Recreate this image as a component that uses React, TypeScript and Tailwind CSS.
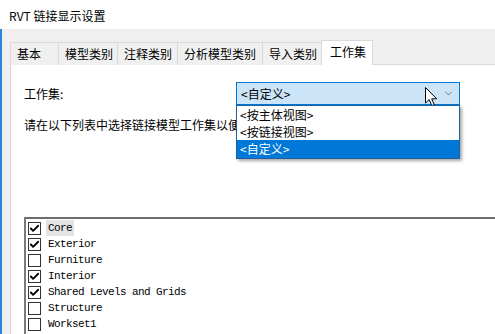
import { Check, ChevronDown } from "lucide-react"

const tabs = [
  { label: "基本", w: 49 },
  { label: "模型类别", w: 60 },
  { label: "注释类别", w: 61 },
  { label: "分析模型类别", w: 86 },
  { label: "导入类别", w: 60 },
]

const worksets = [
  { name: "Core", checked: true, focus: true },
  { name: "Exterior", checked: true },
  { name: "Furniture", checked: false },
  { name: "Interior", checked: true },
  { name: "Shared Levels and Grids", checked: true },
  { name: "Structure", checked: false },
  { name: "Workset1", checked: false },
]

function Cursor() {
  return (
    <svg width="14" height="20" viewBox="0 0 14 20" className="absolute left-[188px] top-[4px]">
      <path d="M0.5 0.5 L0.5 16 L4.2 12.6 L6.8 18.6 L9.2 17.6 L6.7 11.8 L11.6 11.8 Z" fill="#fff" stroke="#000" strokeWidth="1" strokeLinejoin="miter" />
    </svg>
  )
}

export default function App() {
  return (
    <div
      className="w-[495px] h-[334px] overflow-hidden flex flex-col bg-white text-[12px] text-black"
      style={{ fontFamily: '"Noto Sans CJK SC", "Noto Sans", sans-serif' }}
    >
      <div className="h-[29px] shrink-0 bg-white flex items-center pl-[9px] pt-[2px]">RVT 链接显示设置</div>

      <div className="flex-1 flex flex-col bg-[#f0f0f0] border-l-2 border-[#2b86dc] pl-[8px]">
        <div className="flex items-end pt-[11px] relative z-10 -mb-px">
          {tabs.map((t, i) => (
            <div
              key={t.label}
              className={`h-[23px] flex items-center pl-[6px] border border-b-0 border-[#d9d9d9] bg-[#f0f0f0] ${i > 0 ? "-ml-px" : ""}`}
              style={{ width: t.w }}
            >
              {t.label}
            </div>
          ))}
          <div className="-ml-px w-[52px] h-[25px] flex items-center pl-[8px] pb-[2px] border border-b-0 border-[#d9d9d9] bg-white">
            工作集
          </div>
        </div>

        <div className="flex-1 bg-white border-t border-l border-[#d9d9d9] flex flex-col pl-[13px]">
          <div className="mt-[17px] flex items-center h-[23px]">
            <div className="w-[212px]">工作集:</div>
            <div className="relative w-[224px] h-[23px] bg-[#cce4f7] border border-[#0078d7] flex items-center pl-[4px]">
              &lt;自定义&gt;
              <Cursor />
              <ChevronDown className="absolute right-[5px] top-[5px] w-[11px] h-[11px] text-[#444]" strokeWidth={1.5} />
              <div className="absolute left-[-1px] top-[22px] w-[224px] bg-white border border-[#1f5f9e] shadow-[2px_2px_3px_rgba(0,0,0,0.35)] z-20">
                <div className="h-[17px] flex items-center pl-[3px]">&lt;按主体视图&gt;</div>
                <div className="h-[17px] flex items-center pl-[3px]">&lt;按链接视图&gt;</div>
                <div className="h-[18px] flex items-center pl-[3px] bg-[#0078d7] text-white">&lt;自定义&gt;</div>
              </div>
            </div>
          </div>

          <div className="mt-[11px] w-[216px] overflow-hidden whitespace-nowrap">请在以下列表中选择链接模型工作集以便在视图中显示:</div>

          <div
            className="mt-[83px] flex-1 border-t-2 border-l-2 border-t-[#6d6d6d] border-l-[#7a7a7a] pl-[2px] pt-[1px]"
            style={{ fontFamily: '"Liberation Mono", monospace' }}
          >
            {worksets.map((w) => (
              <div key={w.name} className="h-[16px] flex items-center">
                <div className="w-[13px] h-[13px] border border-[#333] bg-white flex items-center justify-center">
                  {w.checked && <Check className="w-[11px] h-[11px] text-black" strokeWidth={4} />}
                </div>
                <div
                  className={`ml-[5px] h-[16px] flex items-center px-[2px] text-[11px] tracking-[-0.6px] ${w.focus ? "bg-[#e3e3e3]" : ""}`}
                >
                  {w.name}
                </div>
              </div>
            ))}
          </div>
        </div>
      </div>
    </div>
  )
}
